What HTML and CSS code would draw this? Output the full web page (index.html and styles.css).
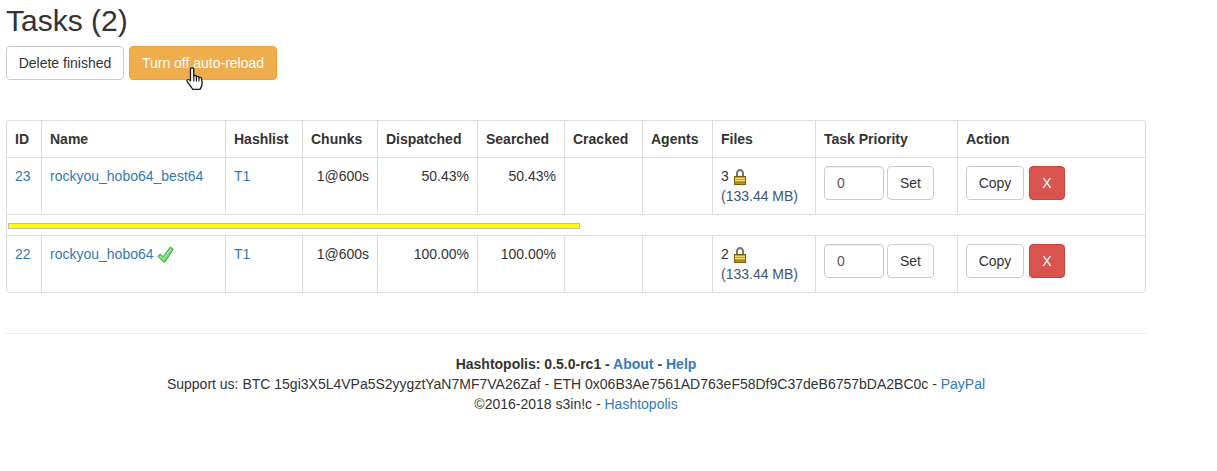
FILE: index.html
```html
<!DOCTYPE html>
<html lang="en">
<head>
<meta charset="utf-8">
<title>Tasks</title>
<link rel="stylesheet" href="styles.css">
</head>
<body>
<main class="page">
  <h2 class="title">Tasks (2)</h2>
  <div class="toolbar">
    <button class="btn btn-delete">Delete finished</button>
    <button class="btn btn-warning">Turn off auto-reload</button>
  </div>
  <svg class="cursor" width="19" height="24" viewBox="0 0 17 24" preserveAspectRatio="none">
    <path d="M4 1.800c.4-1.300 2.600-1.300 2.900 0v7.400c.3-1 2.100-1 2.300 0v1c.3-1 2.100-1 2.300 0v.8c.3-.9 2.200-.8 2.400.4.400 2 .6 4.300.4 6-.2 2.200-.9 3.300-1.800 5H6.200L1.200 14.900c-.7-1.200-.3-2.200.6-2.400 1-.2 1.500.5 2.200 1.400z" fill="#fff" stroke="#1c1c1c" stroke-width="1.200" stroke-linejoin="round"/>
    <path d="M7 9v5.500M9.300 10v4.500M11.600 11v3.500" stroke="#1c1c1c" stroke-width="1" fill="none"/>
  </svg>
  <div class="panel">
    <table class="table">
      <colgroup>
        <col class="c-id"><col class="c-name"><col class="c-hash"><col class="c-chunks"><col class="c-disp"><col class="c-search"><col class="c-crack"><col class="c-agents"><col class="c-files"><col class="c-prio"><col class="c-action">
      </colgroup>
      <thead>
        <tr><th>ID</th><th>Name</th><th>Hashlist</th><th>Chunks</th><th>Dispatched</th><th>Searched</th><th>Cracked</th><th>Agents</th><th>Files</th><th>Task Priority</th><th>Action</th></tr>
      </thead>
      <tbody>
        <tr>
          <td><a href="#">23</a></td>
          <td><a href="#">rockyou_hobo64_best64</a></td>
          <td><a href="#">T1</a></td>
          <td class="num">1@600s</td>
          <td class="num">50.43%</td>
          <td class="num">50.43%</td>
          <td></td>
          <td></td>
          <td>3 <svg class="lock" width="14" height="17" viewBox="0 0 14 17"><path d="M4 9V5.500a3 3.500 0 0 1 6 0V9" fill="none" stroke="#77776e" stroke-width="2"/><rect x="1.500" y="8.500" width="11" height="8" fill="#d0a020" stroke="#7c5c0c"/><path d="M2 10.500h10M2 12.500h10" stroke="#f2dc70"/><path d="M2 14.800h10" stroke="#9c7410"/></svg><br><span class="size">(133.44 MB)</span></td>
          <td><div class="cell-row"><input class="input" type="text" value="0"><button class="btn btn-set">Set</button></div></td>
          <td><div class="cell-row gap"><button class="btn btn-copy">Copy</button><button class="btn btn-danger">X</button></div></td>
        </tr>
        <tr>
          <td class="bar-cell" colspan="11"><div class="bar" style="width:50.43%"></div></td>
        </tr>
        <tr>
          <td><a href="#">22</a></td>
          <td><a href="#">rockyou_hobo64</a> <svg class="check" width="17" height="17" viewBox="0 0 17 17"><path d="M.8 10.300l2.700-2.200 2.600 2.700L13.300 1l2.900 2-7.900 12.700c-.4.600-1.400.7-1.900.2z" fill="#74d874" stroke="#3f9f3f" stroke-linejoin="round"/><path d="M3.200 10l2.900 3.200L13.800 3" fill="none" stroke="#a9eea9" stroke-width="1"/></svg></td>
          <td><a href="#">T1</a></td>
          <td class="num">1@600s</td>
          <td class="num">100.00%</td>
          <td class="num">100.00%</td>
          <td></td>
          <td></td>
          <td>2 <svg class="lock" width="14" height="17" viewBox="0 0 14 17"><path d="M4 9V5.500a3 3.500 0 0 1 6 0V9" fill="none" stroke="#77776e" stroke-width="2"/><rect x="1.500" y="8.500" width="11" height="8" fill="#d0a020" stroke="#7c5c0c"/><path d="M2 10.500h10M2 12.500h10" stroke="#f2dc70"/><path d="M2 14.800h10" stroke="#9c7410"/></svg><br><span class="size">(133.44 MB)</span></td>
          <td><div class="cell-row"><input class="input" type="text" value="0"><button class="btn btn-set">Set</button></div></td>
          <td><div class="cell-row gap"><button class="btn btn-copy">Copy</button><button class="btn btn-danger">X</button></div></td>
        </tr>
      </tbody>
    </table>
  </div>
  <hr class="rule">
  <footer class="footer">
    <div><b>Hashtopolis: 0.5.0-rc1 - <a href="#">About</a> - <a href="#">Help</a></b></div>
    <div>Support us: BTC 15gi3X5L4VPa5S2yygztYaN7MF7VA26Zaf - ETH 0x06B3Ae7561AD763eF58Df9C37deB6757bDA2BC0c - <a href="#">PayPal</a></div>
    <div>©2016-2018 s3in!c - <a href="#">Hashtopolis</a></div>
  </footer>
</main>
</body>
</html>
```
FILE: styles.css
```css
* { box-sizing: border-box; }
html, body { margin: 0; background: #fff; }
body {
  font-family: "Liberation Sans", Arial, sans-serif;
  font-size: 14px;
  line-height: 20px;
  color: #333;
}
a { color: #337ab7; text-decoration: none; }
.page { position: relative; width: 1140px; margin-left: 6px; }
.title {
  margin: 0 0 9px;
  padding-top: 4px;
  font-size: 30px;
  line-height: 33px;
  font-weight: 400;
}
.toolbar { display: flex; gap: 5px; margin-bottom: 40px; }
.btn {
  height: 34px;
  padding: 6px 12px;
  font: inherit;
  color: #333;
  background: #fff;
  border: 1px solid #ccc;
  border-radius: 4px;
  white-space: nowrap;
}
.btn-delete { width: 118px; padding: 6px 0; }
.btn-warning { width: 148px; padding: 6px 0; color: #fff; background: #f0ad4e; border-color: #eea236; }
.btn-danger { width: 36px; padding: 6px 0; color: #fff; background: #d9534f; border-color: #d43f3a; }
.btn-set { width: 47px; padding: 6px 0; }
.btn-copy { width: 58px; padding: 6px 0; }
.cursor { position: absolute; left: 180px; top: 67px; }
.panel { border: 1px solid #ddd; border-radius: 4px; overflow: hidden; }
.table { width: 1138px; table-layout: fixed; border-collapse: separate; border-spacing: 0; }
.c-id { width: 34px; } .c-name { width: 184px; } .c-hash { width: 77px; }
.c-chunks { width: 75px; } .c-disp { width: 100px; } .c-search { width: 87px; }
.c-crack { width: 78px; } .c-agents { width: 70px; } .c-files { width: 103px; }
.c-prio { width: 142px; } .c-action { width: 188px; }
.table th, .table td {
  padding: 8px;
  vertical-align: top;
  text-align: left;
  border-left: 1px solid #ddd;
  white-space: nowrap;
}
.table th:first-child, .table td:first-child { border-left: 0; }
.table td { border-top: 1px solid #ddd; height: 57px; }
.table td.num { text-align: right; }
.table td.bar-cell { height: 21px; padding: 8px 2px 6px 1px; }
.bar { height: 6px; background: #ff0; border: 1px solid #bbb; }
.cell-row { display: flex; gap: 3px; }
.cell-row.gap { gap: 5px; }
.input {
  width: 60px;
  height: 34px;
  padding: 6px 12px;
  font: inherit;
  color: #555;
  background: #fff;
  border: 1px solid #ccc;
  border-radius: 4px;
  box-shadow: inset 0 1px 1px rgba(0,0,0,.075);
}
.size { color: #3f566f; }
.lock { vertical-align: -4px; }
.check { vertical-align: -4px; }
.rule { height: 1px; margin: 40px 0 20px; border: 0; background: #eee; }
.footer { text-align: center; }
```
